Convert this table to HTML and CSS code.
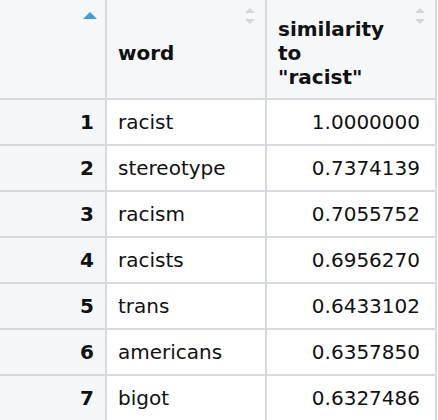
FILE: index.html
```html
<!DOCTYPE html>
<html>
<head>
<meta charset="utf-8">
<link rel="stylesheet" href="styles.css">
</head>
<body>
<table class="dt">
  <thead>
    <tr>
      <th class="idx"><span class="sort asc"></span></th>
      <th class="word"><span class="label">word</span><span class="sort both"></span></th>
      <th class="sim"><span class="label">similarity<br>to<br>"racist"</span><span class="sort both"></span></th>
    </tr>
  </thead>
  <tbody>
    <tr><td class="idx">1</td><td class="word">racist</td><td class="sim">1.0000000</td></tr>
    <tr><td class="idx">2</td><td class="word">stereotype</td><td class="sim">0.7374139</td></tr>
    <tr><td class="idx">3</td><td class="word">racism</td><td class="sim">0.7055752</td></tr>
    <tr><td class="idx">4</td><td class="word">racists</td><td class="sim">0.6956270</td></tr>
    <tr><td class="idx">5</td><td class="word">trans</td><td class="sim">0.6433102</td></tr>
    <tr><td class="idx">6</td><td class="word">americans</td><td class="sim">0.6357850</td></tr>
    <tr><td class="idx">7</td><td class="word">bigot</td><td class="sim">0.6327486</td></tr>
  </tbody>
</table>
</body>
</html>
```
FILE: styles.css
```css
html, body {
  margin: 0;
  padding: 0;
  background: #ffffff;
}

.dt {
  border-collapse: separate;
  border-spacing: 0;
  font-family: "DejaVu Sans", Verdana, sans-serif;
  font-size: 20px;
  color: #111111;
  table-layout: fixed;
}

.dt th,
.dt td {
  box-sizing: border-box;
  border-right: 2px solid #d6d9dd;
  border-bottom: 2px solid #d6d9dd;
  padding: 0;
  line-height: 24px;
  vertical-align: middle;
}

.dt th {
  position: relative;
  height: 100px;
  background: #f6f7f9;
  text-align: left;
  font-weight: bold;
  padding-top: 8px;
}

.dt td {
  height: 46px;
}

.dt .idx {
  width: 107px;
  background: #f4f6f8;
  text-align: right;
  padding-right: 11px;
  font-weight: bold;
}

.dt th.idx {
  background: #f6f7f9;
}

.dt .word {
  width: 160px;
  padding-left: 11px;
}

.dt .sim {
  width: 170px;
  padding-left: 11px;
  padding-right: 15px;
  text-align: right;
}

.dt th.sim {
  text-align: left;
}

.sort {
  position: absolute;
  display: block;
}

.sort.asc {
  right: 8px;
  top: 12px;
  width: 0;
  height: 0;
  border-left: 7px solid transparent;
  border-right: 7px solid transparent;
  border-bottom: 7px solid #3d9cf0;
}

.sort.both {
  right: 9px;
  top: 8px;
  width: 11px;
  height: 16px;
}

.sort.both::before,
.sort.both::after {
  content: "";
  position: absolute;
  left: 0;
  width: 0;
  height: 0;
  border-left: 5.5px solid transparent;
  border-right: 5.5px solid transparent;
}

.sort.both::before {
  top: 0;
  border-bottom: 5px solid #d3d5d8;
}

.sort.both::after {
  bottom: 0;
  border-top: 5px solid #d3d5d8;
}
```
